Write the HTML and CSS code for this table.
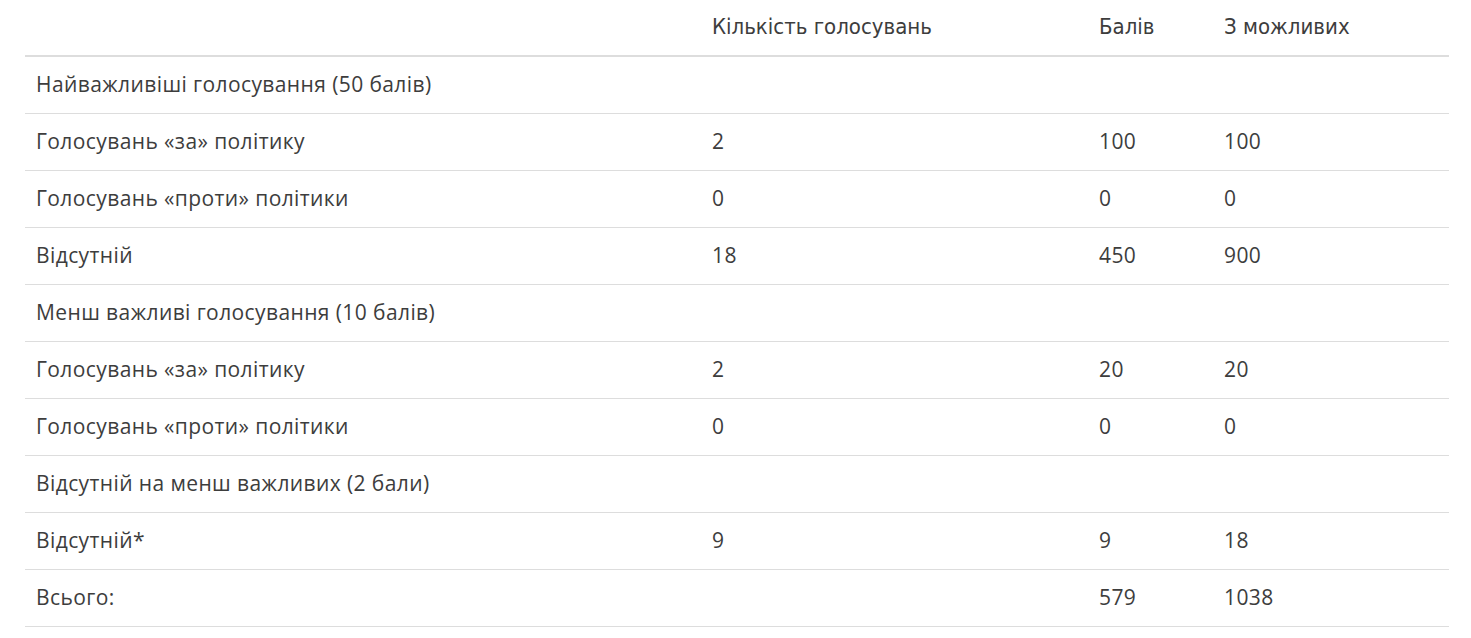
FILE: index.html
```html
<!DOCTYPE html>
<html lang="uk">
<head>
<meta charset="utf-8">
<link rel="stylesheet" href="styles.css">
</head>
<body>
<table class="scores">
  <thead>
    <tr>
      <th class="c1"></th>
      <th class="c2">Кількість голосувань</th>
      <th class="c3">Балів</th>
      <th class="c4">З можливих</th>
    </tr>
  </thead>
  <tbody>
    <tr><td>Найважливіші голосування (50 балів)</td><td></td><td></td><td></td></tr>
    <tr><td>Голосувань «за» політику</td><td>2</td><td>100</td><td>100</td></tr>
    <tr><td>Голосувань «проти» політики</td><td>0</td><td>0</td><td>0</td></tr>
    <tr><td>Відсутній</td><td>18</td><td>450</td><td>900</td></tr>
    <tr><td>Менш важливі голосування (10 балів)</td><td></td><td></td><td></td></tr>
    <tr><td>Голосувань «за» політику</td><td>2</td><td>20</td><td>20</td></tr>
    <tr><td>Голосувань «проти» політики</td><td>0</td><td>0</td><td>0</td></tr>
    <tr><td>Відсутній на менш важливих (2 бали)</td><td></td><td></td><td></td></tr>
    <tr><td>Відсутній*</td><td>9</td><td>9</td><td>18</td></tr>
    <tr><td>Всього:</td><td></td><td>579</td><td>1038</td></tr>
  </tbody>
</table>
</body>
</html>
```
FILE: styles.css
```css
html, body {
  margin: 0;
  padding: 0;
  background: #fff;
}
body {
  padding: 0 22px 0 25px;
  font-family: "Open Sans", "Noto Sans", sans-serif;
  color: #3d3d3d;
}
.scores {
  width: 1424px;
  border-collapse: collapse;
  table-layout: fixed;
}
.scores th {
  font-family: "Liberation Sans Narrow", "DejaVu Sans Condensed", "Roboto", sans-serif;
  font-weight: normal;
  font-size: 22px;
  text-align: left;
  height: 52px;
  padding: 0 11px 3px;
  vertical-align: middle;
  border-bottom: 2px solid #dddddd;
}
.scores td {
  font-size: 21px;
  letter-spacing: 0.4px;
  height: 53px;
  padding: 0 11px 3px;
  vertical-align: middle;
  border-bottom: 1px solid #dddddd;
}
.c1 { width: 654px; }
.c2 { width: 365px; }
.c3 { width: 103px; }
.c4 { width: 214px; }
```
